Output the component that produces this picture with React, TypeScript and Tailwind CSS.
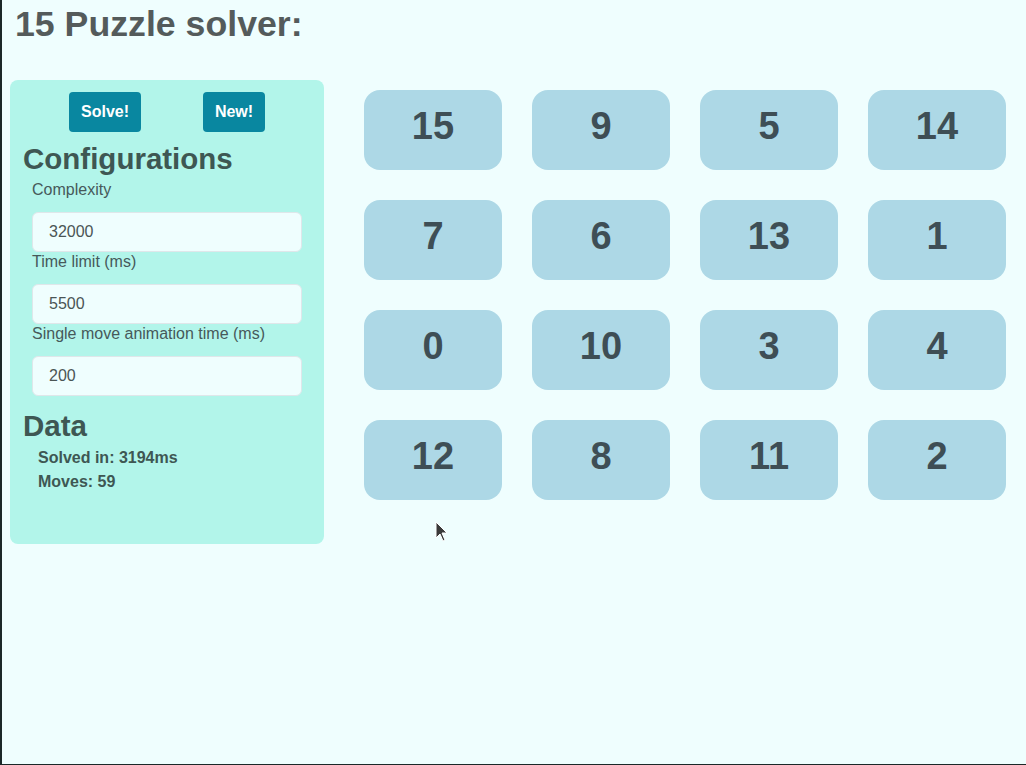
import React from "react";

const tiles = [15, 9, 5, 14, 7, 6, 13, 1, 0, 10, 3, 4, 12, 8, 11, 2];

function Field({ label, value }: { label: string; value: string }) {
  return (
    <div className="flex flex-col">
      <div className="ml-[9px] text-[16px] leading-[20px] text-[#46595a]">{label}</div>
      <div className="ml-[9px] mt-[12px] h-[40px] w-[270px] rounded-[6px] border border-[#dfe7ea] bg-[#effefe] pl-[16px] text-[16px] leading-[38px] text-[#4a5555]">
        {value}
      </div>
    </div>
  );
}

export default function App() {
  return (
    <div
      className="relative h-[765px] w-full overflow-hidden border-b border-l-2 border-[#1b2828] bg-[#effefe]"
      style={{ fontFamily: '"Liberation Sans", Arial, sans-serif' }}
    >
      <h1 className="pl-[13px] pt-[3px] text-[35.7px] font-bold leading-[43px] text-[#545b5b]">15 Puzzle solver:</h1>
      <div className="mt-[34px] flex items-start">
        <div className="ml-[8px] flex h-[464px] w-[314px] flex-col rounded-[8px] bg-[#b2f5ea] pl-[13px] pt-[12px]">
          <div className="ml-[46px] flex gap-[62px]">
            <div className="flex h-[40px] w-[72px] items-center justify-center rounded-[4px] bg-[#0987a0] text-[16px] font-bold text-white">
              Solve!
            </div>
            <div className="flex h-[40px] w-[62px] items-center justify-center rounded-[4px] bg-[#0987a0] text-[16px] font-bold text-white">
              New!
            </div>
          </div>
          <h2 className="mt-[10px] text-[29.5px] font-bold leading-[34px] text-[#3e5753]">Configurations</h2>
          <div className="mt-[4px] flex flex-col">
            <Field label="Complexity" value="32000" />
            <Field label="Time limit (ms)" value="5500" />
            <Field label="Single move animation time (ms)" value="200" />
          </div>
          <h2 className="mt-[13px] text-[29.5px] font-bold leading-[34px] text-[#3e5753]">Data</h2>
          <div className="mt-[3px] pl-[15px] text-[16px] font-bold leading-[24px] text-[#3e5753]">
            <div>Solved in: 3194ms</div>
            <div>Moves: 59</div>
          </div>
        </div>
        <div className="ml-[40px] mt-[10px] grid grid-cols-[repeat(4,138px)] gap-[30px]">
          {tiles.map((t) => (
            <div
              key={t}
              className="flex h-[80px] justify-center rounded-[16px] bg-[#add8e6] pt-[13px] text-[38px] font-bold leading-[46px] text-[#3e4e55]"
            >
              {t}
            </div>
          ))}
        </div>
      </div>
      <svg className="absolute left-[433px] top-[521px]" width="14" height="22" viewBox="0 0 14 22">
        <path d="M1 1 L1 17 L5 13 L8 20 L10 19 L7 12 L12 12 Z" fill="#3a3a3a" stroke="#ffffff" strokeWidth="1" />
      </svg>
    </div>
  );
}
